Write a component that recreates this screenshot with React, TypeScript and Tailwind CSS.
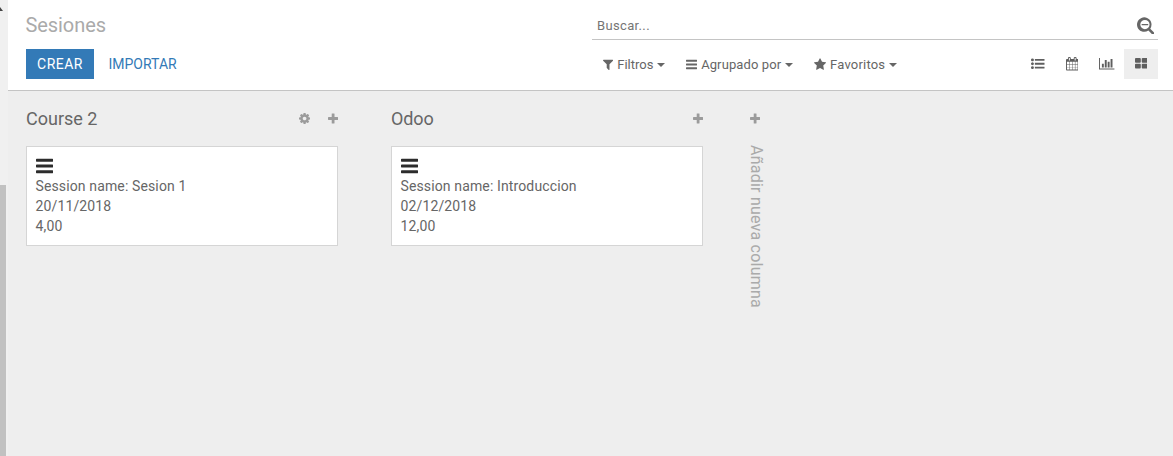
import React from "react";

type IconDef = { units: number; d: string };

const icons = {
  bars: {
    units: 1536,
    d: "M1536 1344v128q0 26-19 45t-45 19h-1408q-26 0-45-19t-19-45v-128q0-26 19-45t45-19h1408q26 0 45 19t19 45zM1536 832v128q0 26-19 45t-45 19h-1408q-26 0-45-19t-19-45v-128q0-26 19-45t45-19h1408q26 0 45 19t19 45zM1536 320v128q0 26-19 45t-45 19h-1408q-26 0-45-19t-19-45v-128q0-26 19-45t45-19h1408q26 0 45 19t19 45z",
  },
  filter: {
    units: 1408,
    d: "M1403 295q17 41-14 70l-493 493v742q0 42-39 59-13 5-25 5-27 0-45-19l-256-256q-19-19-19-45v-486l-493-493q-31-29-14-70 17-39 59-39h1280q42 0 59 39z",
  },
  star: {
    units: 1664,
    d: "M1664 647q0 22-26 48l-363 354 86 500q1 7 1 20 0 21-10.5 35.5t-30.5 14.5q-19 0-40-12l-449-236-449 236q-22 12-40 12-21 0-31.5-14.5t-10.5-35.5q0-6 2-20l86-500-364-354q-25-27-25-48 0-37 56-46l502-73 225-455q19-41 49-41t49 41l225 455 502 73q56 9 56 46z",
  },
  searchMinus: {
    units: 1664,
    d: "M1088 800v64q0 13-9.5 22.5t-22.5 9.5h-576q-13 0-22.5-9.5t-9.5-22.5v-64q0-13 9.5-22.5t22.5-9.5h576q13 0 22.5 9.5t9.5 22.5zm128 32q0-185-131.5-316.5t-316.5-131.5-316.5 131.5-131.5 316.5 131.5 316.5 316.5 131.5 316.5-131.5 131.5-316.5zm448 832q0 53-37.5 90.5t-90.5 37.5q-54 0-90-38l-343-342q-179 124-399 124-143 0-273.5-55.5t-225-150-150-225-55.5-273.5 55.5-273.5 150-225 225-150 273.5-55.5 273.5 55.5 225 150 150 225 55.5 273.5q0 220-124 399l343 343q37 37 37 90z",
  },
  listUl: {
    units: 1792,
    d: "M384 1408q0 80-56 136t-136 56-136-56-56-136 56-136 136-56 136 56 56 136zM384 896q0 80-56 136t-136 56-136-56-56-136 56-136 136-56 136 56 56 136zM1792 1312v192q0 13-9.5 22.5t-22.5 9.5h-1216q-13 0-22.5-9.5t-9.5-22.5v-192q0-13 9.5-22.5t22.5-9.5h1216q13 0 22.5 9.5t9.5 22.5zM384 384q0 80-56 136t-136 56-136-56-56-136 56-136 136-56 136 56 56 136zM1792 800v192q0 13-9.5 22.5t-22.5 9.5h-1216q-13 0-22.5-9.5t-9.5-22.5v-192q0-13 9.5-22.5t22.5-9.5h1216q13 0 22.5 9.5t9.5 22.5zM1792 288v192q0 13-9.5 22.5t-22.5 9.5h-1216q-13 0-22.5-9.5t-9.5-22.5v-192q0-13 9.5-22.5t22.5-9.5h1216q13 0 22.5 9.5t9.5 22.5z",
  },
  calendar: {
    units: 1664,
    d: "M128 1664h288v-288h-288v288zm352 0h320v-288h-320v288zm-352-352h288v-320h-288v320zm352 0h320v-320h-320v320zm-352-384h288v-288h-288v288zm736 736h320v-288h-320v288zm-384-736h320v-288h-320v288zm768 736h288v-288h-288v288zm-384-352h320v-320h-320v320zm-352-864v-288q0-13-9.5-22.5t-22.5-9.5h-64q-13 0-22.5 9.5t-9.5 22.5v288q0 13 9.5 22.5t22.5 9.5h64q13 0 22.5-9.5t9.5-22.5zm736 864h288v-320h-288v320zm-384-384h320v-288h-320v288zm384 0h288v-288h-288v288zm32-480v-288q0-13-9.5-22.5t-22.5-9.5h-64q-13 0-22.5 9.5t-9.5 22.5v288q0 13 9.5 22.5t22.5 9.5h64q13 0 22.5-9.5t9.5-22.5zm384-64v1280q0 52-38 90t-90 38h-1408q-52 0-90-38t-38-90v-1280q0-52 38-90t90-38h128v-96q0-66 47-113t113-47h64q66 0 113 47t47 113v96h384v-96q0-66 47-113t113-47h64q66 0 113 47t47 113v96h128q52 0 90 38t38 90z",
  },
  barChart: {
    units: 2048,
    d: "M640 896v512h-256v-512h256zm384-512v1024h-256v-1024h256zm1024 1152v128h-2048v-1536h128v1408h1920zm-640-896v768h-256v-768h256zm384-384v1152h-256v-1152h256z",
  },
  thLarge: {
    units: 1664,
    d: "M768 1024v384q0 52-38 90t-90 38h-512q-52 0-90-38t-38-90v-384q0-52 38-90t90-38h512q52 0 90 38t38 90zM768 256v384q0 52-38 90t-90 38h-512q-52 0-90-38t-38-90v-384q0-52 38-90t90-38h512q52 0 90 38t38 90zM1664 1024v384q0 52-38 90t-90 38h-512q-52 0-90-38t-38-90v-384q0-52 38-90t90-38h512q52 0 90 38t38 90zM1664 256v384q0 52-38 90t-90 38h-512q-52 0-90-38t-38-90v-384q0-52 38-90t90-38h512q52 0 90 38t38 90z",
  },
  gear: {
    units: 1536,
    d: "M1024 896q0-106-75-181t-181-75-181 75-75 181 75 181 181 75 181-75 75-181zm512-109v222q0 12-8 23t-20 13l-185 28q-19 54-39 91 35 50 107 138 10 12 10 25t-9 23q-27 37-99 108t-94 71q-12 0-26-9l-138-108q-44 23-91 38-16 136-29 186-7 28-36 28h-222q-14 0-24.5-8.5t-11.5-21.5l-28-184q-49-16-90-37l-141 107q-10 9-25 9-14 0-25-11-126-114-165-168-7-10-7-23 0-12 8-23 15-21 51-66.5t54-70.5q-27-50-41-99l-183-27q-13-2-21-12.5t-8-23.5v-222q0-12 8-23t19-13l186-28q14-46 39-92-40-57-107-138-10-12-10-24 0-10 9-23 26-36 98.5-107.5t94.5-71.5q13 0 26 10l138 107q44-23 91-38 16-136 29-186 7-28 36-28h222q14 0 24.5 8.5t11.5 21.5l28 184q49 16 90 37l142-107q9-9 24-9 13 0 25 10 129 119 165 170 7 8 7 22 0 12-8 23-15 21-51 66.5t-54 70.5q26 50 41 98l183 28q13 2 21 12.5t8 23.5z",
  },
  plus: {
    units: 1408,
    d: "M1408 800v192q0 40-28 68t-68 28h-416v416q0 40-28 68t-68 28h-192q-40 0-68-28t-28-68v-416h-416q-40 0-68-28t-28-68v-192q0-40 28-68t68-28h416v-416q0-40 28-68t68-28h192q40 0 68 28t28 68v416h416q40 0 68 28t28 68z",
  },
} satisfies Record<string, IconDef>;

function Icon({ name, size = 13, className = "" }: { name: keyof typeof icons; size?: number; className?: string }) {
  const { units, d } = icons[name];
  return (
    <svg
      viewBox={`0 0 ${units} 1792`}
      width={(units / 1792) * size}
      height={size}
      fill="currentColor"
      aria-hidden="true"
      className={`block shrink-0 ${className}`}
    >
      <path d={d} />
    </svg>
  );
}

function Caret() {
  return (
    <svg width="8" height="4" viewBox="0 0 8 4" fill="currentColor" aria-hidden="true" className="mt-0.5 ml-1 block shrink-0">
      <path d="M0 0h8L4 4z" />
    </svg>
  );
}

function FilterButton({
  icon,
  label,
  className,
}: {
  icon: "filter" | "bars" | "star";
  label: string;
  className: string;
}) {
  return (
    <button className={`flex h-[30px] items-center whitespace-nowrap text-[13px] text-[#666] ${className}`}>
      <Icon name={icon} className="mr-1" />
      <span className="pt-px">{label}</span>
      <Caret />
    </button>
  );
}

function Column({ title, titleClass = "", hasSettings, lines }: { title: string; titleClass?: string; hasSettings?: boolean; lines: string[] }) {
  return (
    <section className="w-[312px]">
      <header className="flex h-[55px] items-center justify-between text-[#9b9b9b]">
        <h2 className={`text-[18px] text-[#666] ${titleClass}`}>{title}</h2>
        <div className="flex items-center gap-[18px]">
          {hasSettings && <Icon name="gear" />}
          <Icon name="plus" />
        </div>
      </header>
      <article className="h-[100px] border border-[#d5d5d5] bg-white pt-[9px] pl-[8.5px] text-[14px] leading-5 tracking-[0.13px] text-[#666]">
        <Icon name="bars" size={20} className="text-[#2c2c2c]" />
        {lines.map((line) => (
          <p key={line}>{line}</p>
        ))}
      </article>
    </section>
  );
}

export default function App() {
  return (
    <div className="flex h-[456px] w-[1173px] overflow-hidden bg-[#eee] font-[Roboto,sans-serif]">
      <aside className="flex w-2 shrink-0 flex-col bg-[#f0f0f0]">
        <svg width="4" height="12" viewBox="0 0 4 12" aria-hidden="true" className="block">
          <path d="M0 7l3 4H0z" fill="#444" />
        </svg>
        <div className="mt-[173px] w-1.5 grow bg-[#c1c1c1]" />
      </aside>
      <div className="flex grow flex-col">
        <header className="flex h-[91px] shrink-0 justify-between border-b border-[#c4c4c4] bg-white pr-[15px] pl-[18px]">
          <div>
            <h1 className="mt-[10px] -ml-[0.5px] h-[30px] text-[20px] leading-[30px] tracking-[-0.08px] text-[#aaa]">Sesiones</h1>
            <div className="mt-[9px] flex h-[30px] text-[14px]">
              <button className="w-[68px] bg-[#337ab7] pt-px tracking-[0.5px] text-white">CREAR</button>
              <button className="ml-[14.5px] pt-px text-[#337ab7]">IMPORTAR</button>
            </div>
          </div>
          <div className="w-[566px]">
            <div className="mt-[10px] flex h-[30px] items-center justify-between border-b border-[#c4c4c4] pr-1 pl-[5px] text-[#666]">
              <span className="pt-[3px] text-[13px] tracking-[0.35px] text-[#757575]">Buscar...</span>
              <Icon name="searchMinus" size={18.5} className="mt-px" />
            </div>
            <div className="mt-[9px] flex h-[30px] items-center">
              <FilterButton icon="filter" label="Filtros" className="ml-[11px] w-[83px]" />
              <FilterButton icon="bars" label="Agrupado por" className="w-[128px] tracking-[0.1px]" />
              <FilterButton icon="star" label="Favoritos" className="w-[90px] tracking-[0.2px]" />
              <nav className="ml-auto flex text-[#5f5f5f]">
                {(["listUl", "calendar", "barChart", "thLarge"] as const).map((name) => (
                  <button
                    key={name}
                    className={`flex h-[30px] w-[34px] items-center justify-center ${
                      name === "thLarge" ? "bg-[#eee]" : name === "barChart" ? "" : "pr-[2px]"
                    }`}
                  >
                    <Icon name={name} size={13.5} />
                  </button>
                ))}
              </nav>
            </div>
          </div>
        </header>
        <main className="flex gap-[53px] pl-[18px]">
          <Column title="Course 2" hasSettings lines={["Session name: Sesion 1", "20/11/2018", "4,00"]} />
          <Column title="Odoo" titleClass="tracking-[-0.1px]" lines={["Session name: Introduccion", "02/12/2018", "12,00"]} />
          <div className="-ml-[10px] w-5 text-[#aaa]">
            <div className="flex h-[55px] items-center pl-1 text-[#9b9b9b]">
              <Icon name="plus" />
            </div>
            <div className="-mt-px text-[16px] leading-5 tracking-[0.23px] whitespace-nowrap [writing-mode:vertical-rl]">
              Añadir nueva columna
            </div>
          </div>
        </main>
      </div>
    </div>
  );
}
